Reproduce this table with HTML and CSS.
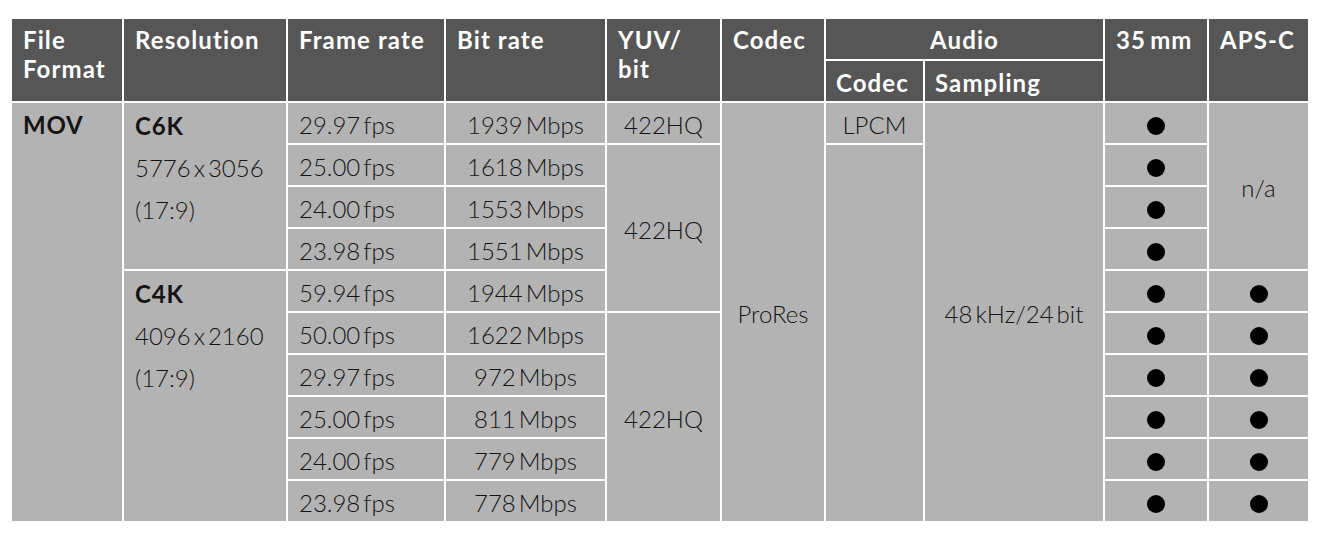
FILE: index.html
```html
<!DOCTYPE html>
<html lang="en">
<head>
<meta charset="utf-8">
<title>Recording formats</title>
<link rel="stylesheet" href="styles.css">
</head>
<body>
<table class="spec">
  <colgroup>
    <col class="c-format"><col class="c-res"><col class="c-fps"><col class="c-bit"><col class="c-yuv"><col class="c-codec"><col class="c-acodec"><col class="c-samp"><col class="c-ff"><col class="c-aps">
  </colgroup>
  <thead>
    <tr class="h1">
      <th rowspan="2">File<br>Format</th>
      <th rowspan="2">Resolution</th>
      <th rowspan="2">Frame rate</th>
      <th rowspan="2">Bit rate</th>
      <th rowspan="2">YUV/<br>bit</th>
      <th rowspan="2">Codec</th>
      <th colspan="2" class="center">Audio</th>
      <th rowspan="2">35&#8201;mm</th>
      <th rowspan="2">APS-C</th>
    </tr>
    <tr class="h2">
      <th class="sub">Codec</th>
      <th class="sub">Sampling</th>
    </tr>
  </thead>
  <tbody>
    <tr>
      <td rowspan="10" class="top bold">MOV</td>
      <td rowspan="4" class="top res"><b>C6K</b><br>5776&#8201;x&#8201;3056<br>(17:9)</td>
      <td>29.97&#8201;fps</td>
      <td class="center">1939&#8201;Mbps</td>
      <td class="center">422HQ</td>
      <td rowspan="10" class="center">ProRes</td>
      <td class="center">LPCM</td>
      <td rowspan="10" class="center">48&#8201;kHz/24&#8201;bit</td>
      <td class="mark"><span class="dot"></span></td>
      <td rowspan="4" class="center">n/a</td>
    </tr>
    <tr>
      <td>25.00&#8201;fps</td>
      <td class="center">1618&#8201;Mbps</td>
      <td rowspan="4" class="center">422HQ</td>
      <td rowspan="9"></td>
      <td class="mark"><span class="dot"></span></td>
    </tr>
    <tr>
      <td>24.00&#8201;fps</td>
      <td class="center">1553&#8201;Mbps</td>
      <td class="mark"><span class="dot"></span></td>
    </tr>
    <tr>
      <td>23.98&#8201;fps</td>
      <td class="center">1551&#8201;Mbps</td>
      <td class="mark"><span class="dot"></span></td>
    </tr>
    <tr>
      <td rowspan="6" class="top res"><b>C4K</b><br>4096&#8201;x&#8201;2160<br>(17:9)</td>
      <td>59.94&#8201;fps</td>
      <td class="center">1944&#8201;Mbps</td>
      <td class="mark"><span class="dot"></span></td>
      <td class="mark"><span class="dot"></span></td>
    </tr>
    <tr>
      <td>50.00&#8201;fps</td>
      <td class="center">1622&#8201;Mbps</td>
      <td rowspan="5" class="center">422HQ</td>
      <td class="mark"><span class="dot"></span></td>
      <td class="mark"><span class="dot"></span></td>
    </tr>
    <tr>
      <td>29.97&#8201;fps</td>
      <td class="center">972&#8201;Mbps</td>
      <td class="mark"><span class="dot"></span></td>
      <td class="mark"><span class="dot"></span></td>
    </tr>
    <tr>
      <td>25.00&#8201;fps</td>
      <td class="center">811&#8201;Mbps</td>
      <td class="mark"><span class="dot"></span></td>
      <td class="mark"><span class="dot"></span></td>
    </tr>
    <tr>
      <td>24.00&#8201;fps</td>
      <td class="center">779&#8201;Mbps</td>
      <td class="mark"><span class="dot"></span></td>
      <td class="mark"><span class="dot"></span></td>
    </tr>
    <tr>
      <td>23.98&#8201;fps</td>
      <td class="center">778&#8201;Mbps</td>
      <td class="mark"><span class="dot"></span></td>
      <td class="mark"><span class="dot"></span></td>
    </tr>
  </tbody>
</table>
</body>
</html>
```
FILE: styles.css
```css
html, body {
  margin: 0;
  padding: 0;
  background: #ffffff;
}

.spec {
  margin: 17px 0 0 10px;
  border-collapse: separate;
  border-spacing: 2px;
  background: #ffffff;
  table-layout: fixed;
  width: 1300px;
  font-family: "Lato", "Liberation Sans", sans-serif;
  font-size: 24px;
  color: #141414;
}

.c-format { width: 110px; }
.c-res { width: 162px; }
.c-fps { width: 156px; }
.c-bit { width: 159px; }
.c-yuv { width: 113px; }
.c-codec { width: 102px; }
.c-acodec { width: 97px; }
.c-samp { width: 178px; }
.c-ff { width: 102px; }
.c-aps { width: 99px; }

.spec th {
  box-sizing: border-box;
  background: #565656;
  color: #ffffff;
  font-weight: 700;
  text-align: left;
  vertical-align: top;
  padding: 6px 0 0 11px;
  line-height: 29px;
  letter-spacing: 1.1px;
  white-space: nowrap;
}

.spec tr.h1 th { height: 40px; }

.spec th.center {
  text-align: center;
  padding-left: 0;
}

.spec th.sub {
  height: 40px;
  padding: 3px 0 0 10px;
  line-height: 37px;
  vertical-align: middle;
}

.spec td {
  box-sizing: border-box;
  background: #b3b3b3;
  height: 40px;
  padding: 4px 0 0 11px;
  font-weight: 300;
  line-height: 36px;
  vertical-align: middle;
  white-space: nowrap;
}

.spec td.center {
  text-align: center;
  padding-left: 0;
}

.spec td.top { vertical-align: top; }

.spec td.bold { font-weight: 700; letter-spacing: 0.8px; }

.spec td.res { line-height: 42px; padding-top: 2px; }

.spec td.res b { font-weight: 700; letter-spacing: 0.8px; }

.spec td.mark {
  text-align: center;
  padding: 0;
  line-height: 40px;
}

.dot {
  display: inline-block;
  width: 18px;
  height: 18px;
  border-radius: 50%;
  background: #000000;
  vertical-align: middle;
}
```
